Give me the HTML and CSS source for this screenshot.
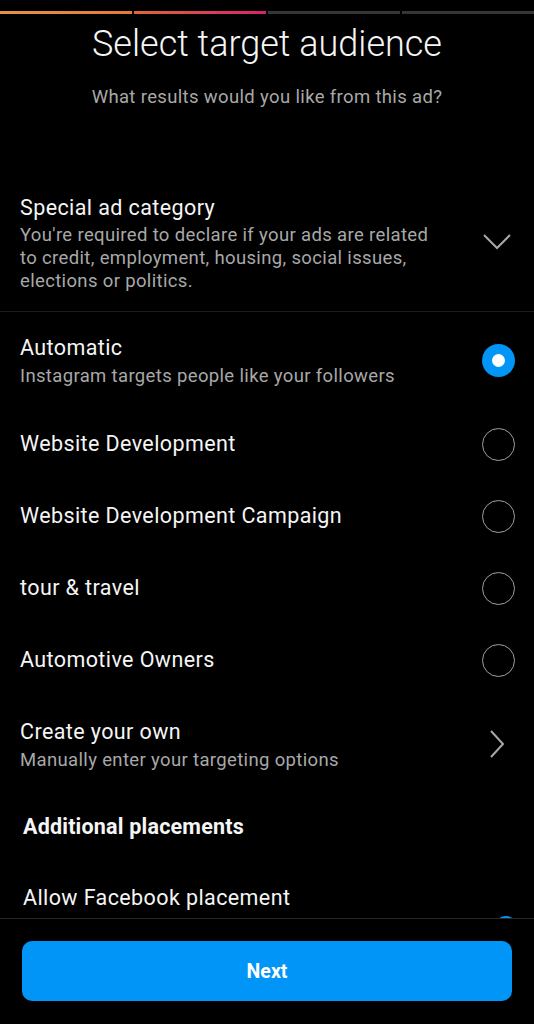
FILE: index.html
```html
<!DOCTYPE html>
<html lang="en">

<head>
    <meta charset="UTF-8">
    <meta name="viewport" content="width=device-width, initial-scale=1.0">
    <title>Select target audience</title>
    <link rel="stylesheet" href="styles.css">
</head>

<body>
    <div class="page">
        <div class="content">
            <div class="progress">
                <span class="step step-1"></span>
                <span class="step step-2"></span>
                <span class="step"></span>
                <span class="step"></span>
            </div>

            <div class="header">
                <h1 class="title">Select target audience</h1>
                <p class="subtitle">What results would you like from this ad?</p>
            </div>

            <div class="special">
                <div class="text">
                    <p class="item-title">Special ad category</p>
                    <p class="special-desc">You're required to declare if your ads are related to credit, employment, housing, social issues, elections or politics.</p>
                </div>
                <svg class="chevron-down" width="30" height="18" viewBox="0 0 30 18">
                    <polyline points="2,2 15,15 28,2" fill="none" stroke="#a8a8a8" stroke-width="2" />
                </svg>
            </div>

            <div class="row row-tall">
                <div class="text">
                    <p class="item-title">Automatic</p>
                    <p class="item-sub">Instagram targets people like your followers</p>
                </div>
                <span class="radio checked"></span>
            </div>
            <div class="row">
                <p class="item-title">Website Development</p>
                <span class="radio"></span>
            </div>
            <div class="row">
                <p class="item-title">Website Development Campaign</p>
                <span class="radio"></span>
            </div>
            <div class="row">
                <p class="item-title">tour &amp; travel</p>
                <span class="radio"></span>
            </div>
            <div class="row">
                <p class="item-title">Automotive Owners</p>
                <span class="radio"></span>
            </div>
            <div class="row row-tall">
                <div class="text">
                    <p class="item-title">Create your own</p>
                    <p class="item-sub">Manually enter your targeting options</p>
                </div>
                <svg class="chevron-right" width="18" height="30" viewBox="0 0 18 30">
                    <polyline points="3,2 15,15 3,28" fill="none" stroke="#a8a8a8" stroke-width="2" />
                </svg>
            </div>

            <h2 class="section">Additional placements</h2>

            <div class="row row-placement">
                <p class="item-title">Allow Facebook placement</p>
                <span class="toggle"></span>
            </div>
        </div>

        <div class="footer">
            <button class="next">Next</button>
        </div>
    </div>
</body>

</html>
```

FILE: styles.css
```css
* {
    margin: 0;
    padding: 0;
    box-sizing: border-box;
}

body {
    background-color: #000;
    color: #f5f5f5;
    font-family: Roboto, "Noto Sans", sans-serif;
}

.page {
    display: flex;
    flex-direction: column;
    height: 100vh;
}

.content {
    flex: 1;
    overflow: hidden;
}

.progress {
    display: flex;
    gap: 2px;
    padding-top: 11px;
}

.step {
    flex: 1;
    height: 3px;
    background-color: #363636;
}

.step-1 {
    background: linear-gradient(to right, #e99244, #e47a35);
}

.step-2 {
    background: linear-gradient(to right, #e2663a, #d9206c);
}

.header {
    text-align: center;
    padding-top: 8px;
}

.title {
    font-size: 36px;
    font-weight: 300;
    line-height: 44px;
}

.subtitle {
    margin-top: 19px;
    font-size: 18.5px;
    letter-spacing: 0.35px;
    line-height: 24px;
    color: #a8a8a8;
}

.special {
    display: flex;
    align-items: center;
    justify-content: space-between;
    margin-top: 85px;
    padding: 0 20px 18px 20px;
    border-bottom: 1px solid #1c1c1c;
}

.special .text {
    width: 420px;
}

.special-desc {
    margin-top: 2px;
    font-size: 18.5px;
    letter-spacing: 0.35px;
    line-height: 23px;
    color: #a8a8a8;
}

.chevron-down {
    margin-right: 2px;
    margin-top: -4px;
}

.item-title {
    font-size: 21.5px;
    letter-spacing: 0.4px;
    line-height: 28px;
}

.item-sub {
    font-size: 18.5px;
    letter-spacing: 0.35px;
    line-height: 28px;
    color: #a8a8a8;
}

.row {
    display: flex;
    align-items: center;
    justify-content: space-between;
    height: 72px;
    padding: 0 19px 0 20px;
}

.row-tall {
    height: 96px;
}

.row-tall .text {
    margin-top: 4px;
}

.radio {
    width: 33px;
    height: 33px;
    border-radius: 50%;
    border: 1.5px solid #a0a0a0;
}

.radio.checked {
    border: none;
    background-color: #0095f6;
    display: flex;
    align-items: center;
    justify-content: center;
}

.radio.checked::after {
    content: "";
    width: 13px;
    height: 13px;
    border-radius: 50%;
    background-color: #fff;
}

.chevron-right {
    margin-right: 9px;
}

.section {
    font-size: 21.5px;
    font-weight: 700;
    letter-spacing: 0.2px;
    line-height: 28px;
    padding: 21px 23px 0 23px;
}

.row-placement {
    align-items: flex-start;
    padding: 43px 16px 0 23px;
    height: auto;
}

.toggle {
    width: 24px;
    height: 24px;
    margin-top: 32px;
    border-radius: 50%;
    background-color: #0095f6;
}

.footer {
    height: 106px;
    border-top: 1px solid #262626;
    padding: 22px 22px 23px 22px;
}

.next {
    width: 100%;
    height: 60px;
    border: none;
    border-radius: 10px;
    background-color: #0095f6;
    color: #fff;
    font-family: Roboto, "Noto Sans", sans-serif;
    font-size: 19.5px;
    font-weight: 700;
}
```
